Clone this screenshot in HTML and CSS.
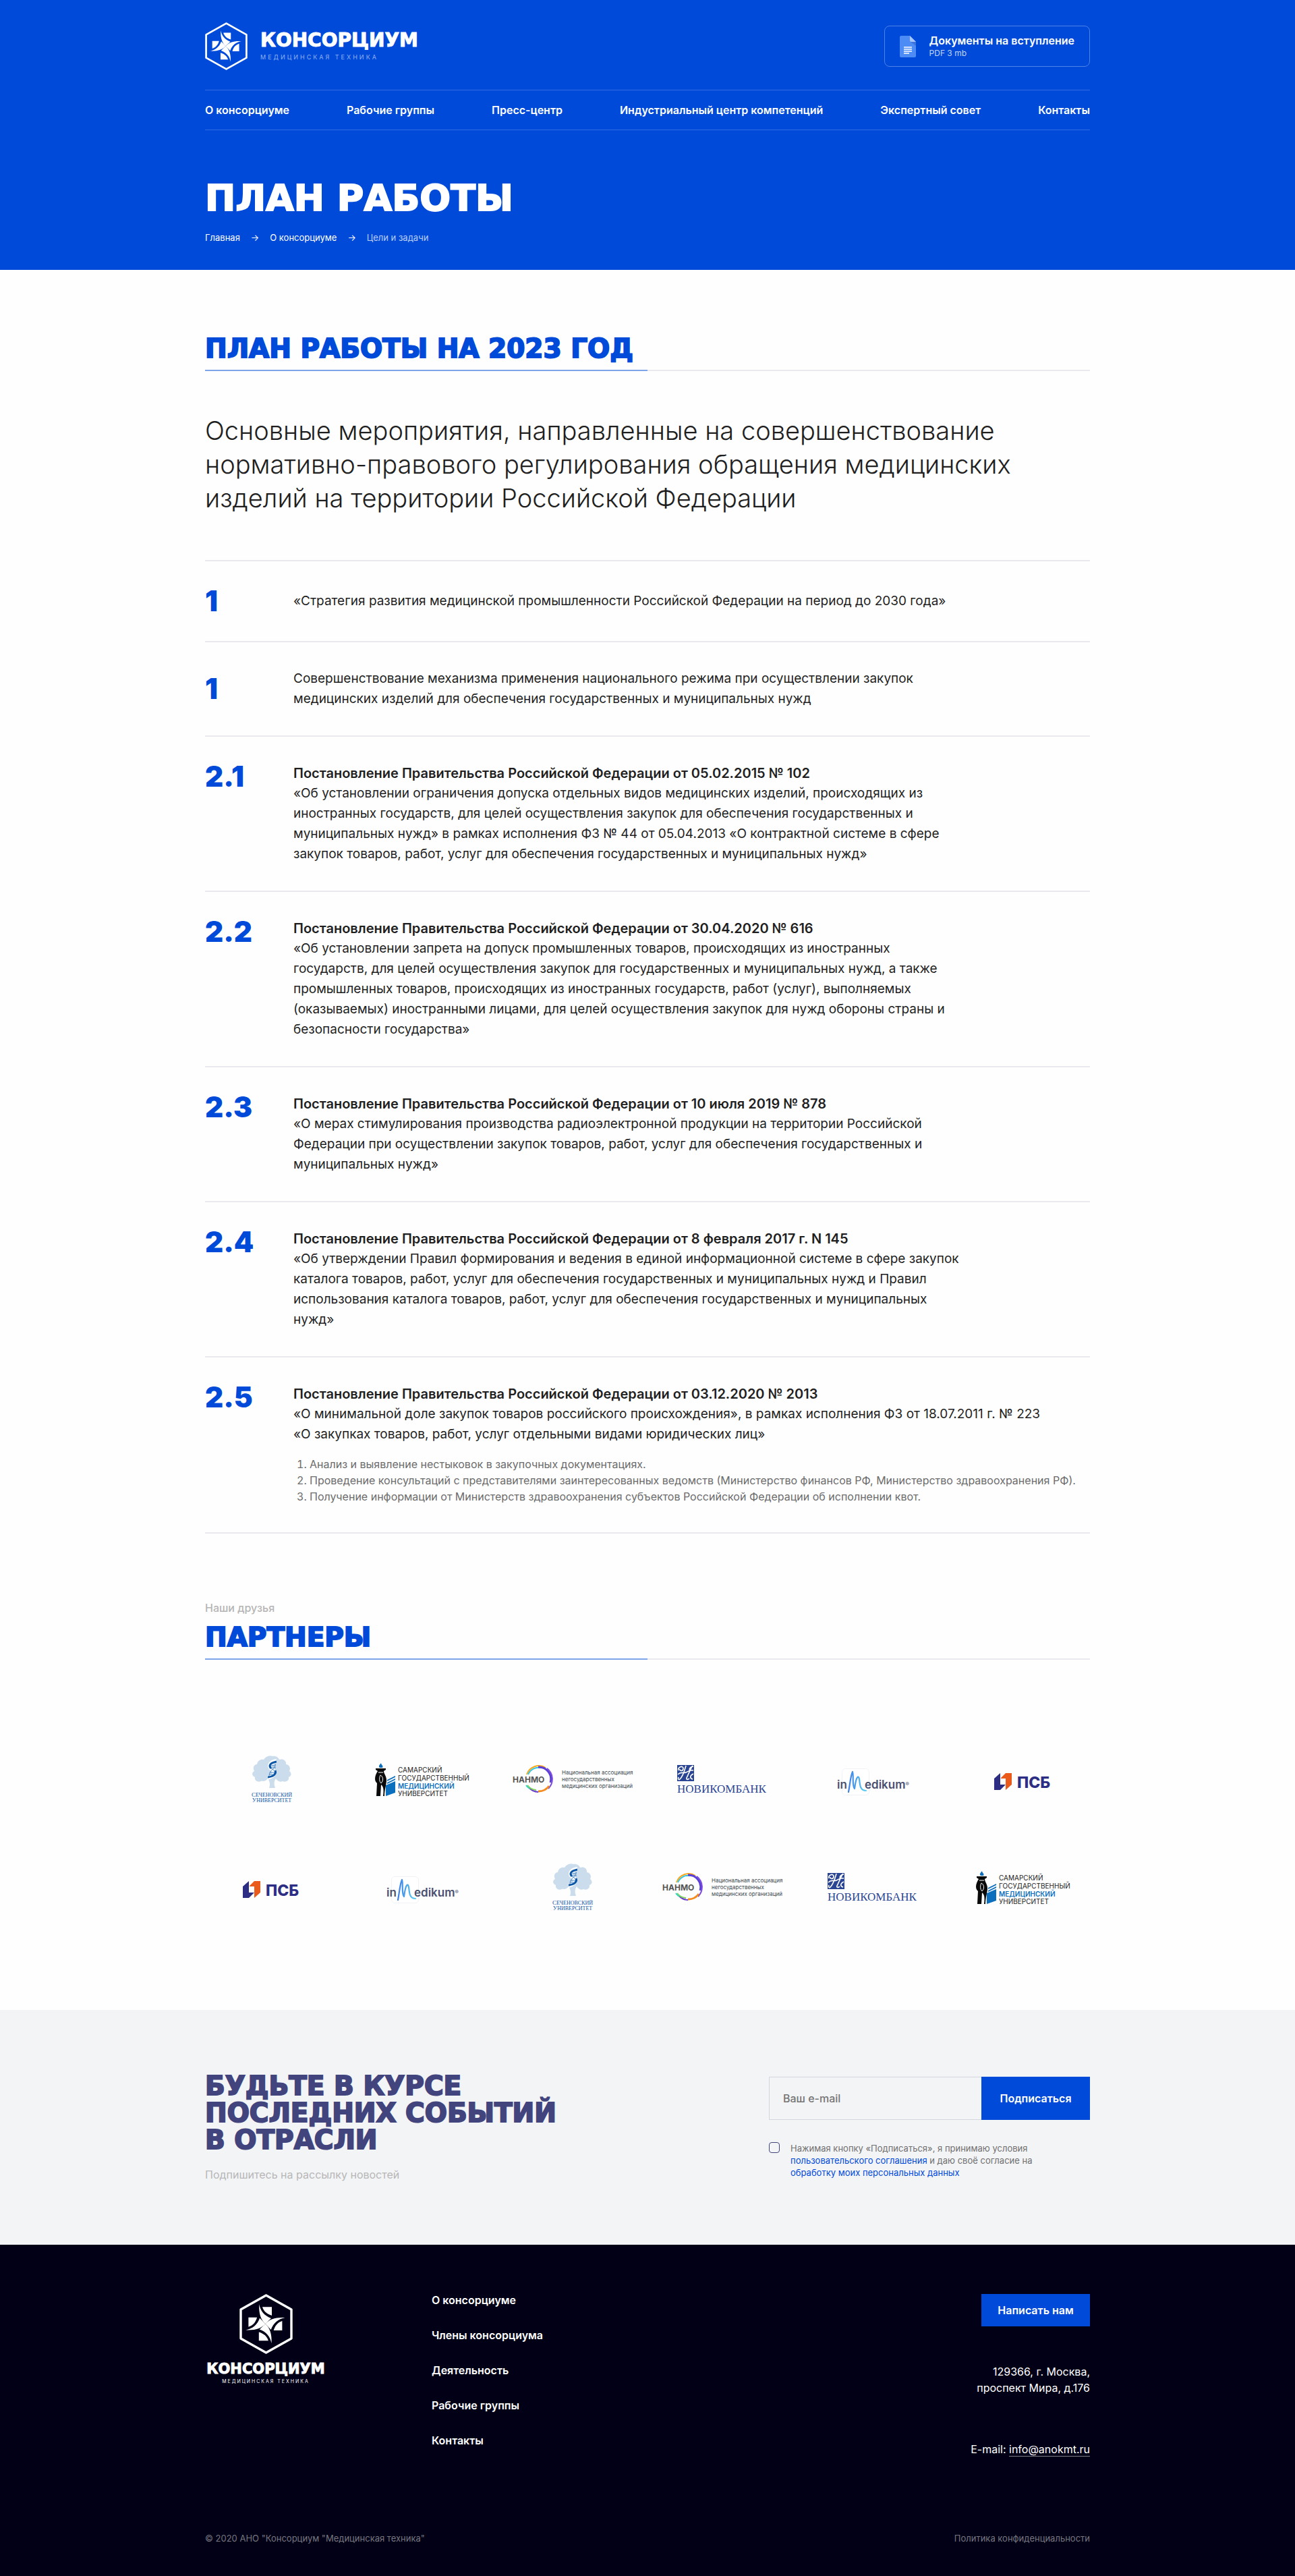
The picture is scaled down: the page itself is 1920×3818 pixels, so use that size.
FILE: index.html
```html
<!DOCTYPE html>
<html lang="ru">
<head>
<meta charset="utf-8">
<meta name="viewport" content="width=device-width, initial-scale=1">
<title>План работы — Консорциум «Медицинская техника»</title>
<link rel="stylesheet" href="styles.css">
</head>
<body>

<svg class="sprite" aria-hidden="true">
  <defs>
    <linearGradient id="script-blue" x1="0" y1="0" x2="1" y2="0">
      <stop offset="0" stop-color="#3f7fe8"/><stop offset="1" stop-color="#5ad0f0"/>
    </linearGradient>
    <g id="blade">
      <path d="M29.3 15.3C31 25 37 32.500 47 36L38.400 44.300C31.500 38 28.500 29 29.300 15.300Z"/>
      <path d="M34 19.300H48V32C41 30 36 26 34 19.300Z"/>
    </g>
    <symbol id="mark" viewBox="0 0 79 89">
      <path d="M39.500 2L77 23V66L39.500 87L2 66V23Z" fill="none" stroke="#fff" stroke-width="3.400" stroke-linejoin="round"/>
      <g fill="#fff">
        <use href="#blade"/>
        <use href="#blade" transform="rotate(90 38.400 44.300)"/>
        <use href="#blade" transform="rotate(180 38.400 44.300)"/>
        <use href="#blade" transform="rotate(270 38.400 44.300)"/>
      </g>
    </symbol>
    <symbol id="tree" viewBox="0 0 58 48">
      <path d="M25 48C27 43 26 38 23 34C19 40 14 37 13 38C8 40 3 37 4 32C-1 30 -1 25 3 23C0 18 3 13 7 13C8 7 13 5 17 6C20 1 26 -1 30 1C35 0 39 3 40 6C46 4 51 8 50 13C56 14 57 19 55 23C59 26 58 31 54 32C55 37 50 40 45 38C42 40 37 38 35 34C32 38 32 43 34 48Z" fill="#cbdded"/>
      <path d="M36 8C25 10 24 16 29 20S35 29 23 33" fill="none" stroke="#fff" stroke-width="6"/>
      <path d="M36 9C26 11 24 15 28 19" fill="none" stroke="#0b55a6" stroke-width="3"/>
      <path d="M34 22C36 27 32 31 23 32" fill="none" stroke="#0b55a6" stroke-width="3"/>
      <path d="M28 19L34 23M27 15H34M29 18H35M26 25H33M26 28H32M34 12C36 20 25 20 25 30" fill="none" stroke="#4a86c4" stroke-width="1"/>
    </symbol>
    <symbol id="torch" viewBox="0 0 31 49">
      <path d="M8 7C5 4 9 2 10 0C10 3 14 4 12 7Z" fill="#0b6fbd"/>
      <path d="M2 8H17V10L14 12C14 16 18 19 18 26C18 32 15 40 15 49H13C14 41 14 35 10 32L9 49H3L4 30C-1 26 1 18 5 12L2 10Z" fill="#0a0a0a"/>
      <path d="M9 18C13 20 14 26 10 30C7 27 7 22 9 18M6 14H13" fill="none" stroke="#fff" stroke-width="1"/>
      <path d="M17 33L31 27V44L17 49ZM19 25L31 19V21L19 27ZM19 29L31 23V25L19 31Z" fill="#0b6fbd"/>
    </symbol>
    <symbol id="ring" viewBox="0 0 42 42">
      <g fill="none" stroke-width="2">
        <path d="M3 14A19 19 0 0 1 31 4" stroke="#f7a81b"/>
        <path d="M5 14A17 17 0 0 1 24 4" stroke="#35c4dd"/>
        <path d="M20 3A18 18 0 0 1 38 26" stroke="#5a40d6" stroke-width="3"/>
        <path d="M33 5A20 20 0 0 1 35 35" stroke="#7b4ae0"/>
        <path d="M36 31A19 19 0 0 1 20 39" stroke="#f58a1f" stroke-width="3"/>
        <path d="M20 40A19 19 0 0 1 6 33" stroke="#6a3fd0"/>
        <path d="M17 37A17 17 0 0 1 4 30" stroke="#7fd35a"/>
        <path d="M7 35A19 19 0 0 1 2 30" stroke="#35d4c5"/>
      </g>
    </symbol>
    <symbol id="monogram" viewBox="0 0 25 24">
      <path d="M0 0H25V24H0Z" fill="#2a4593"/>
      <path d="M2 8C0 3 9 0 9 5C9 10 3 9 4 6M13 1C11 8 9 16 4 21C2 23 1 20 2 18M23 1C20 5 17 13 14 19C13 22 16 22 18 20M1 14C6 9 9 13 13 11S19 7 24 8M24 2C19 2 17 7 19 8M24 13C18 16 19 20 23 21" fill="none" stroke="#fff" stroke-width="1.600"/>
    </symbol>
    <symbol id="script-m" viewBox="0 0 41 40">
      <rect x=".5" y=".5" width="40" height="39" rx="5" fill="#fff" stroke="#f0f2f6"/>
      <path d="M10 35C12 25 13 11 16 5C18 12 15 25 19 30C20 22 22 11 25 13C28 17 24 33 36 33" fill="none" stroke="url(#script-blue)" stroke-width="2.200" stroke-linecap="round" stroke-linejoin="round"/>
    </symbol>
    <symbol id="blocks" viewBox="0 0 26 25">
      <path d="M0 8L9 0V17H17L9 25H0Z" fill="#2d2d83"/>
      <path d="M10 7L17 0H26V17L17 25V8H10Z" fill="#ea5b1b"/>
    </symbol>
  </defs>
</svg>

<header class="header">
  <div class="container">
    <div class="header-top">
      <a class="logo" href="#">
        <svg class="logo-mark" aria-hidden="true"><use href="#mark"/></svg>
        <span class="logo-text">
          <span class="logo-name">КОНСОРЦИУМ</span>
          <span class="logo-sub">МЕДИЦИНСКАЯ ТЕХНИКА</span>
        </span>
      </a>
      <a class="doc-link" href="#">
        <svg class="doc-icon" viewBox="0 0 24 32" aria-hidden="true">
          <path d="M2 0H15L24 9V30A2 2 0 0 1 22 32H2A2 2 0 0 1 0 30V2A2 2 0 0 1 2 0Z" fill="#4d8bf5"/>
          <path d="M15 0L24 9H17A2 2 0 0 1 15 7Z" fill="#a6c5fa"/>
          <path d="M16 9H24V15Z" fill="#3c74da"/>
          <path d="M6 17H18M6 20H18M6 23H18M6 26H14" stroke="#fff" stroke-width="1.300"/>
        </svg>
        <span class="doc-text">
          <span class="doc-title">Документы на вступление</span>
          <span class="doc-size">PDF 3 mb</span>
        </span>
      </a>
    </div>
    <nav class="nav" aria-label="Основное меню">
      <a href="#">О консорциуме</a>
      <a href="#">Рабочие группы</a>
      <a href="#">Пресс-центр</a>
      <a href="#">Индустриальный центр компетенций</a>
      <a href="#">Экспертный совет</a>
      <a href="#">Контакты</a>
    </nav>
    <h1 class="page-title">ПЛАН РАБОТЫ</h1>
    <nav class="crumbs" aria-label="Навигационная цепочка">
      <a href="#">Главная</a>
      <span>→</span>
      <a href="#">О консорциуме</a>
      <span>→</span>
      <span class="crumb-current">Цели и задачи</span>
    </nav>
  </div>
</header>

<main>
  <section class="plan container">
    <h2 class="section-title">ПЛАН РАБОТЫ НА 2023 ГОД</h2>
    <p class="intro">Основные мероприятия, направленные на совершенствование<br>нормативно-правового регулирования обращения медицинских<br>изделий на территории Российской Федерации</p>

    <div class="plan-list">
      <article class="plan-row plan-row-short">
        <span class="plan-num">1</span>
        <div class="plan-body">
          <p>«Стратегия развития медицинской промышленности Российской Федерации на период до 2030 года»</p>
        </div>
      </article>
      <article class="plan-row plan-row-short">
        <span class="plan-num">1</span>
        <div class="plan-body">
          <p>Совершенствование механизма применения национального режима при осуществлении закупок<br>медицинских изделий для обеспечения государственных и муниципальных нужд</p>
        </div>
      </article>
      <article class="plan-row">
        <span class="plan-num">2.1</span>
        <div class="plan-body">
          <h3>Постановление Правительства Российской Федерации от 05.02.2015 № 102</h3>
          <p>«Об установлении ограничения допуска отдельных видов медицинских изделий, происходящих из<br>иностранных государств, для целей осуществления закупок для обеспечения государственных и<br>муниципальных нужд» в рамках исполнения ФЗ № 44 от 05.04.2013 «О контрактной системе в сфере<br>закупок товаров, работ, услуг для обеспечения государственных и муниципальных нужд»</p>
        </div>
      </article>
      <article class="plan-row">
        <span class="plan-num">2.2</span>
        <div class="plan-body">
          <h3>Постановление Правительства Российской Федерации от 30.04.2020 № 616</h3>
          <p>«Об установлении запрета на допуск промышленных товаров, происходящих из иностранных<br>государств, для целей осуществления закупок для государственных и муниципальных нужд, а также<br>промышленных товаров, происходящих из иностранных государств, работ (услуг), выполняемых<br>(оказываемых) иностранными лицами, для целей осуществления закупок для нужд обороны страны и<br>безопасности государства»</p>
        </div>
      </article>
      <article class="plan-row">
        <span class="plan-num">2.3</span>
        <div class="plan-body">
          <h3>Постановление Правительства Российской Федерации от 10 июля 2019 № 878</h3>
          <p>«О мерах стимулирования производства радиоэлектронной продукции на территории Российской<br>Федерации при осуществлении закупок товаров, работ, услуг для обеспечения государственных и<br>муниципальных нужд»</p>
        </div>
      </article>
      <article class="plan-row">
        <span class="plan-num">2.4</span>
        <div class="plan-body">
          <h3>Постановление Правительства Российской Федерации от 8 февраля 2017 г. N 145</h3>
          <p>«Об утверждении Правил формирования и ведения в единой информационной системе в сфере закупок<br>каталога товаров, работ, услуг для обеспечения государственных и муниципальных нужд и Правил<br>использования каталога товаров, работ, услуг для обеспечения государственных и муниципальных<br>нужд»</p>
        </div>
      </article>
      <article class="plan-row">
        <span class="plan-num">2.5</span>
        <div class="plan-body">
          <h3>Постановление Правительства Российской Федерации от 03.12.2020 № 2013</h3>
          <p>«О минимальной доле закупок товаров российского происхождения», в рамках исполнения ФЗ от 18.07.2011 г. № 223<br>«О закупках товаров, работ, услуг отдельными видами юридических лиц»</p>
          <ol class="tasks">
            <li>Анализ и выявление нестыковок в закупочных документациях.</li>
            <li>Проведение консультаций с представителями заинтересованных ведомств (Министерство финансов РФ, Министерство здравоохранения РФ).</li>
            <li>Получение информации от Министерств здравоохранения субъектов Российской Федерации об исполнении квот.</li>
          </ol>
        </div>
      </article>
    </div>
  </section>

  <section class="partners container">
    <p class="kicker">Наши друзья</p>
    <h2 class="section-title">ПАРТНЕРЫ</h2>
    <div class="partner-grid">
      <svg class="partner sechenov" viewBox="0 0 60 70">
        <use href="#tree" x="1" width="58" height="48"/>
        <text x="30" y="61" text-anchor="middle">С<tspan class="small">ЕЧЕНОВСКИЙ</tspan></text>
        <text x="30" y="69" text-anchor="middle">У<tspan class="small">НИВЕРСИТЕТ</tspan></text>
      </svg>
      <svg class="partner samara" viewBox="0 0 142 49">
        <use href="#torch" width="31" height="49"/>
        <text x="35" y="14">САМАРСКИЙ</text>
        <text x="35" y="26">ГОСУДАРСТВЕННЫЙ</text>
        <text x="35" y="38" class="accent">МЕДИЦИНСКИЙ</text>
        <text x="35" y="49">УНИВЕРСИТЕТ</text>
      </svg>
      <svg class="partner nanmo" viewBox="0 0 178 42">
        <use href="#ring" x="18" width="42" height="42"/>
        <path class="gap" d="M16 15H26V29H16Z"/>
        <text class="abbr" x="0" y="26">НАНМО</text>
        <text x="73" y="14">Национальная ассоциация</text>
        <text x="73" y="24">негосударственных</text>
        <text x="73" y="34">медицинских организаций</text>
      </svg>
      <svg class="partner novikom" viewBox="0 0 134 42">
        <use href="#monogram" width="25" height="24"/>
        <text x="0" y="41">НОВИКОМБАНК</text>
      </svg>
      <svg class="partner medikum" viewBox="0 0 106 50">
        <use href="#script-m" x="7" y="9" width="41" height="40"/>
        <text x="0" y="39">in</text>
        <text x="41" y="39">edikum<tspan class="reg" dy="-4">®</tspan></text>
      </svg>
      <svg class="partner psb" viewBox="0 0 86 34">
        <use href="#blocks" y="8" width="26" height="25"/>
        <text x="34" y="30">ПСБ</text>
      </svg>

      <svg class="partner psb" viewBox="0 0 86 34">
        <use href="#blocks" y="8" width="26" height="25"/>
        <text x="34" y="30">ПСБ</text>
      </svg>
      <svg class="partner medikum" viewBox="0 0 106 50">
        <use href="#script-m" x="7" y="9" width="41" height="40"/>
        <text x="0" y="39">in</text>
        <text x="41" y="39">edikum<tspan class="reg" dy="-4">®</tspan></text>
      </svg>
      <svg class="partner sechenov" viewBox="0 0 60 70">
        <use href="#tree" x="1" width="58" height="48"/>
        <text x="30" y="61" text-anchor="middle">С<tspan class="small">ЕЧЕНОВСКИЙ</tspan></text>
        <text x="30" y="69" text-anchor="middle">У<tspan class="small">НИВЕРСИТЕТ</tspan></text>
      </svg>
      <svg class="partner nanmo" viewBox="0 0 178 42">
        <use href="#ring" x="18" width="42" height="42"/>
        <path class="gap" d="M16 15H26V29H16Z"/>
        <text class="abbr" x="0" y="26">НАНМО</text>
        <text x="73" y="14">Национальная ассоциация</text>
        <text x="73" y="24">негосударственных</text>
        <text x="73" y="34">медицинских организаций</text>
      </svg>
      <svg class="partner novikom" viewBox="0 0 134 42">
        <use href="#monogram" width="25" height="24"/>
        <text x="0" y="41">НОВИКОМБАНК</text>
      </svg>
      <svg class="partner samara" viewBox="0 0 142 49">
        <use href="#torch" width="31" height="49"/>
        <text x="35" y="14">САМАРСКИЙ</text>
        <text x="35" y="26">ГОСУДАРСТВЕННЫЙ</text>
        <text x="35" y="38" class="accent">МЕДИЦИНСКИЙ</text>
        <text x="35" y="49">УНИВЕРСИТЕТ</text>
      </svg>
    </div>
  </section>
</main>

<section class="subscribe">
  <div class="container subscribe-inner">
    <div>
      <h2 class="subscribe-title">БУДЬТЕ В КУРСЕ<br>ПОСЛЕДНИХ СОБЫТИЙ<br>В ОТРАСЛИ</h2>
      <p class="subscribe-note">Подпишитесь на рассылку новостей</p>
    </div>
    <form class="subscribe-form">
      <div class="field-row">
        <input class="field" type="email" placeholder="Ваш e-mail" aria-label="Ваш e-mail">
        <button class="btn" type="submit">Подписаться</button>
      </div>
      <div class="consent">
        <input class="check" type="checkbox" id="consent">
        <label for="consent">Нажимая кнопку «Подписаться», я принимаю условия<br><a href="#">пользовательского соглашения</a> и даю своё согласие на<br><a href="#">обработку моих персональных данных</a></label>
      </div>
    </form>
  </div>
</section>

<footer class="footer">
  <div class="container">
    <div class="footer-main">
      <a class="footer-logo" href="#">
        <svg class="footer-mark" aria-hidden="true"><use href="#mark"/></svg>
        <span class="footer-name">КОНСОРЦИУМ</span>
        <span class="footer-sub">МЕДИЦИНСКАЯ ТЕХНИКА</span>
      </a>
      <nav class="footer-nav" aria-label="Меню в подвале">
        <a href="#">О консорциуме</a>
        <a href="#">Члены консорциума</a>
        <a href="#">Деятельность</a>
        <a href="#">Рабочие группы</a>
        <a href="#">Контакты</a>
      </nav>
      <div class="contacts">
        <button class="btn btn-small" type="button">Написать нам</button>
        <address class="address">129366, г. Москва,<br>проспект Мира, д.176</address>
        <p class="email">E-mail: <a href="mailto:info@anokmt.ru">info@anokmt.ru</a></p>
      </div>
    </div>
    <div class="footer-bottom">
      <span>© 2020 АНО "Консорциум "Медицинская техника"</span>
      <a href="#">Политика конфиденциальности</a>
    </div>
  </div>
</footer>

</body>
</html>
```
FILE: styles.css
```css
:root {
  --blue: #004ad9;
  --ink: #1f1f1f;
  --line: #e9e9ee;
  --indigo: #42457d;
  --text: Inter, "Noto Sans", sans-serif;
  --display: "DejaVu Sans", Inter, sans-serif;
}

* { box-sizing: border-box; }

body, h1, h2, h3, p, ol { margin: 0; }

body {
  font-family: var(--text);
  font-size: 16px;
  line-height: 24px;
  color: var(--ink);
  background: #fefefe;
}

a { color: inherit; text-decoration: none; }

.sprite { position: absolute; width: 0; height: 0; }

.container {
  max-width: 1352px;
  margin: 0 auto;
  padding: 0 20px;
}

/* The display face is set extra heavy */
.logo-name,
.footer-name { -webkit-text-stroke: 1px currentColor; }
.page-title,
.section-title,
.subscribe-title { -webkit-text-stroke: 2px currentColor; }

/* Header */
.header {
  background: var(--blue);
  color: #fff;
  padding: 33px 0 38px;
}

.header-top {
  display: flex;
  justify-content: space-between;
  align-items: center;
  margin-bottom: 29px;
}

.logo { display: flex; align-items: center; gap: 19px; }
.logo-mark { width: 63px; height: 71px; }
.logo-text { display: flex; flex-direction: column; gap: 5px; }
.logo-name { font: bold 28px/28px var(--display); }
.logo-sub { font-size: 9px; line-height: 12px; letter-spacing: 3px; color: #8fb0f0; }

.doc-link {
  display: flex;
  align-items: center;
  gap: 20px;
  height: 61px;
  padding: 0 22px;
  border: 1px solid #4d82e6;
  border-radius: 8px;
}
.doc-icon { width: 24px; height: 32px; }
.doc-text { display: flex; flex-direction: column; }
.doc-title { font-weight: 600; line-height: 20px; }
.doc-size { font-size: 12px; line-height: 18px; color: #c3d4f6; }

.nav {
  display: flex;
  justify-content: space-between;
  padding: 17px 0;
  border-top: 1px solid #2f6be2;
  border-bottom: 1px solid #2f6be2;
  font-weight: 600;
}

.page-title {
  margin-top: 71px;
  font: bold 54px/60px var(--display);
}

.crumbs {
  display: flex;
  gap: 16px;
  margin-top: 18px;
  font-size: 13px;
  line-height: 20px;
}
.crumb-current { color: #b9cdf5; }

/* Headings with a two-tone rule */
.section-title {
  position: relative;
  padding-bottom: 9px;
  border-bottom: 2px solid var(--line);
  font: bold 39px/44px var(--display);
  color: var(--blue);
}
.section-title::after {
  content: "";
  position: absolute;
  left: 0;
  bottom: -2px;
  width: 50%;
  height: 2px;
  background: #7fa3ea;
}

/* Plan */
.plan { padding-top: 95px; }

.intro {
  margin-top: 63px;
  font-size: 38px;
  font-weight: 300;
  line-height: 50px;
}

.plan-list { margin-top: 67px; border-top: 2px solid var(--line); }

.plan-row {
  display: grid;
  grid-template-columns: 131px 1fr;
  align-items: start;
  padding: 39px 0;
  border-bottom: 2px solid var(--line);
}
.plan-row-short { align-items: center; min-height: 120px; }

.plan-num {
  font-size: 42px;
  font-weight: 900;
  line-height: 40px;
  color: var(--blue);
}
.plan-body h3 { font-size: 20px; font-weight: 600; line-height: 30px; }
.plan-body p { font-size: 19px; line-height: 30px; }

.tasks {
  margin: 17px 0 2px;
  padding-left: 24px;
  color: #6c6c6c;
}

/* Partners */
.partners { padding-top: 98px; padding-bottom: 142px; }
.kicker { margin-bottom: 10px; font-weight: 500; color: #b5b5b5; }

.partner-grid {
  display: grid;
  grid-template-columns: repeat(6, 1fr);
  grid-auto-rows: 80px;
  row-gap: 80px;
  place-items: center;
  margin: 137px -12px 0;
}
.partner { overflow: visible; }

.sechenov { width: 60px; height: 70px; font: 9px "Liberation Serif", serif; fill: #0b55a6; }
.sechenov .small { font-size: 8px; }
.samara { width: 142px; height: 49px; font-size: 10px; fill: #222; }
.samara .accent { font-weight: 600; fill: #0b6fbd; }
.nanmo { width: 178px; height: 42px; font-size: 8px; fill: #3d4a4f; }
.nanmo .abbr { font-size: 12px; font-weight: 700; fill: #555; }
.nanmo .gap { fill: #fefefe; }
.novikom { width: 134px; height: 42px; font: 17px "Liberation Serif", serif; fill: #2a4593; }
.medikum { width: 106px; height: 50px; font-size: 17px; font-weight: 600; fill: #4a5070; }
.medikum .reg { font-size: 8px; }
.psb { width: 86px; height: 34px; font-size: 23px; font-weight: 800; fill: #2d2d83; }

/* Subscribe */
.subscribe { padding: 93px 0 92px; background: #f3f4f6; }
.subscribe-inner { display: flex; justify-content: space-between; }
.subscribe-title { font: bold 39px/40px var(--display); color: var(--indigo); }
.subscribe-note { margin-top: 19px; color: #b7b7b7; }

.subscribe-form { width: 476px; padding-top: 6px; }
.field-row { display: flex; }
.field {
  flex: 1;
  min-width: 0;
  height: 64px;
  padding: 0 20px;
  border: 1px solid #d3d5df;
  border-right: 0;
  border-radius: 0;
  background: transparent;
  font: 500 16px/24px var(--text);
}
.field::placeholder { color: #757575; opacity: 1; }

.btn {
  width: 161px;
  height: 64px;
  padding: 0;
  border: 0;
  background: var(--blue);
  color: #fff;
  font: 600 16px/24px var(--text);
  cursor: pointer;
}
.btn-small { height: 48px; }

.consent { display: flex; gap: 16px; margin-top: 33px; font-size: 13px; line-height: 18px; color: #707070; }
.consent a { color: var(--blue); }
.check {
  appearance: none;
  flex: none;
  width: 16px;
  height: 16px;
  margin: 0;
  border: 1px solid var(--indigo);
  border-radius: 4px;
}
.check:checked { background: var(--indigo); }

/* Footer */
.footer { padding: 73px 0 50px; background: #010016; color: #fff; }
.footer-main { display: grid; grid-template-columns: 180px 1fr auto; column-gap: 156px; }

.footer-logo { display: flex; flex-direction: column; align-items: center; }
.footer-mark { width: 79px; height: 89px; }
.footer-name { margin-top: 10px; font: bold 21px/24px var(--display); }
.footer-sub { margin-top: 2px; font-size: 7px; line-height: 10px; letter-spacing: 2px; }

.footer-nav { display: flex; flex-direction: column; align-items: flex-start; gap: 34px; font-weight: 600; line-height: 18px; }

.contacts { text-align: right; }
.address { margin-top: 55px; font-style: normal; }
.email { margin-top: 67px; }
.email a { border-bottom: 1px solid #80808a; }
.contacts .btn { display: block; margin-left: auto; }

.footer-bottom {
  display: flex;
  justify-content: space-between;
  margin-top: 112px;
  font-size: 13px;
  line-height: 16px;
  color: #77767f;
}
```
